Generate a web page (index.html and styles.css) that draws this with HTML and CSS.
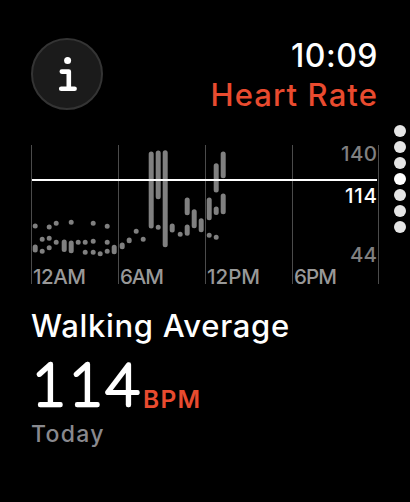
FILE: index.html
```html
<!DOCTYPE html>
<html lang="en">
<head>
<meta charset="utf-8">
<title>Heart Rate</title>
<link rel="stylesheet" href="styles.css">
</head>
<body>
<div class="watch">
  <main class="screen">
    <header class="header">
      <button class="info" aria-label="Information">
        <svg width="20" height="36" viewBox="0 0 20 36">
          <circle cx="10.6" cy="4.6" r="3.5" fill="#fff"/>
          <path d="M4.8 15.6H11.8V32.8M4.2 32.8H17.6" fill="none" stroke="#fff" stroke-width="4.6" stroke-linecap="round" stroke-linejoin="round"/>
        </svg>
      </button>
      <div class="heading">
        <div class="time">10:09</div>
        <h1 class="title">Heart Rate</h1>
      </div>
    </header>
    <svg class="chart" width="348" height="139" viewBox="31 145 348 139">
      <path class="grid" d="M31.5 145V284M118.5 145V284M205.5 145V284M292.5 145V284M378.5 145V284"/>
      <path class="samples" d="M35 225.9v.01M49 226.9v.01M56 223.2v.01M71 222.2v.01M93 223.2v.01M107 226.2v.01M42 239.2v.01M49 238.2v.01M35 247V250M42 251.2v.01M49 247.7v.01M56 242.2v.01M64 242V249.5M71 243V250.8M78 242.2v.01M85 242.2v.01M93 241.2v.01M107 242.2v.01M85 252.2v.01M93 252.2v.01M100 253.7v.01M107 251.2v.01M114 247.2V251.8M122 245V246.8M129 240V240.8M136 231.2v.01M143 239.2v.01M151 154V226M158 153V196.8M158 227.2v.01M165 152.8V244.8M172 226V230M180 234.2v.01M187 200V212.8M187 227V233.2M194 211.8V225.8M201 220.8V229.8M209 200V217.8M209 235.2v.01M216 165.8V190M216 209V212.5M216 237.2v.01M223 154V175.8M223 196V211.8" transform="translate(.2 0)"/>
      <path class="average" d="M32 180H377"/>
      <g class="hours">
        <text x="33" y="283.5" textLength="53">12AM</text>
        <text x="120" y="283.5" textLength="44">6AM</text>
        <text x="207" y="283.5" textLength="53">12PM</text>
        <text x="294" y="283.5" textLength="43">6PM</text>
      </g>
      <g class="values">
        <text x="341" y="161" textLength="36">140</text>
        <text x="345" y="203" textLength="32" class="current">114</text>
        <text x="350" y="262" textLength="27">44</text>
      </g>
    </svg>
    <section class="summary">
      <h2 class="label">Walking Average</h2>
      <div class="reading">
        <svg class="number" width="112" height="54" viewBox="0 0 112 54">
          <text x="1" y="46.6" textLength="107.5">114</text>
        </svg>
        <span class="unit">BPM</span>
      </div>
      <div class="day">Today</div>
    </section>
  </main>
  <nav class="pages">
    <i></i><i></i><i></i><i class="active"></i><i></i><i></i><i></i>
  </nav>
</div>
</body>
</html>
```
FILE: styles.css
```css
* { box-sizing: border-box; }
body {
  margin: 0;
  background: #000;
  color: #fff;
  font-family: Inter, "Liberation Sans", sans-serif;
}
.watch {
  display: flex;
  width: 410px;
  height: 502px;
  overflow: hidden;
}
.screen {
  width: 348px;
  margin-left: 31px;
  padding-top: 35px;
}
.header {
  display: flex;
  justify-content: space-between;
  height: 110px;
  padding-top: 3px;
}
.info {
  display: flex;
  align-items: center;
  justify-content: center;
  width: 72px;
  height: 72px;
  padding: 0;
  border: 2px solid #343434;
  border-radius: 50%;
  background: #1b1b1b;
}
.heading {
  display: flex;
  flex-direction: column;
  align-items: flex-end;
  margin-top: -2px;
  padding-right: 1px;
}
.time {
  font-size: 32px;
  font-weight: 500;
  line-height: 39px;
  letter-spacing: .5px;
}
.title {
  margin: 0;
  color: #e94b2f;
  font-size: 31px;
  font-weight: 500;
  line-height: 40px;
  letter-spacing: 1.1px;
}
.chart { display: block; overflow: visible; }
.grid { stroke: #4b4b4b; stroke-width: 1; }
.samples {
  fill: none;
  stroke: #808080;
  stroke-width: 5;
  stroke-linecap: round;
}
.average { stroke: #fff; stroke-width: 2; }
.hours, .values {
  fill: #989898;
  font-size: 20.5px;
  font-weight: 500;
}
.values { fill: #808080; }
.values .current { fill: #fff; font-weight: 500; }
.label {
  margin: 22px 0 0;
  font-size: 31px;
  font-weight: 500;
  line-height: 40px;
  letter-spacing: .7px;
  white-space: nowrap;
}
.reading {
  display: flex;
  align-items: flex-start;
  height: 73px;
}
.number {
  flex: none;
  margin-top: 12px;
  overflow: visible;
}
.number text {
  font: 100 58px Lato, sans-serif;
  fill: #fff;
  stroke: #fff;
  stroke-width: 4.6;
  stroke-linejoin: round;
}
.unit {
  margin-top: 39px;
  color: #e94b2f;
  font-size: 24.5px;
  font-weight: 600;
  line-height: 28px;
  letter-spacing: 1.3px;
}
.day {
  color: #89898e;
  font-size: 23px;
  font-weight: 500;
  line-height: 30px;
  letter-spacing: 1.3px;
}
.pages {
  display: flex;
  flex-direction: column;
  gap: 4px;
  margin: 125px 0 0 15px;
}
.pages i {
  width: 12px;
  height: 12px;
  border-radius: 50%;
  background: #e5e5e5;
}
.pages .active { background: #fff; }
```
